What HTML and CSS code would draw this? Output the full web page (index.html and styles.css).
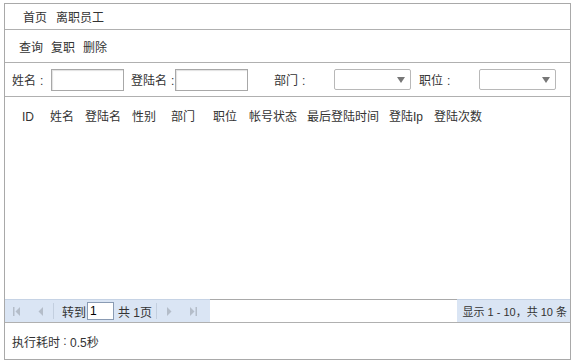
FILE: index.html
```html
<!DOCTYPE html>
<html>
<head>
<meta charset="utf-8">
<link rel="stylesheet" href="styles.css">
</head>
<body>
<div class="frame">
  <div class="crumb"><span>首页</span><span>离职员工</span></div>
  <div class="toolbar"><span>查询</span><span>复职</span><span>删除</span></div>
  <div class="search">
    <span class="lbl l1">姓名<span class="cl">:</span></span><input class="txt t1" type="text">
    <span class="lbl l2">登陆名<span class="cl">:</span></span><input class="txt t2" type="text">
    <span class="lbl l3">部门<span class="cl">:</span></span><span class="sel"><span class="arrow"></span></span>
    <span class="lbl l4">职位<span class="cl">:</span></span><span class="sel"><span class="arrow"></span></span>
  </div>
  <div class="grid">
    <div class="head">
      <span class="c1">ID</span><span class="c2">姓名</span><span class="c3">登陆名</span><span class="c4">性别</span><span class="c5">部门</span><span class="c6">职位</span><span class="c7">帐号状态</span><span class="c8">最后登陆时间</span><span class="c9">登陆Ip</span><span>登陆次数</span>
    </div>
  </div>
  <div class="pager">
    <div class="pleft">
      <svg class="pi first" width="8" height="9" viewBox="0 0 8 9"><rect x="0" y="0" width="1.5" height="9" fill="#b4bdc9"/><path d="M7 0 L2.5 4.5 L7 9 Z" fill="#b4bdc9"/></svg>
      <svg class="pi prev" width="6" height="9" viewBox="0 0 6 9"><path d="M5 0 L0.5 4.5 L5 9 Z" fill="#b4bdc9"/></svg>
      <span class="sep"></span>
      <span class="goto">转到</span><input class="pg" type="text" value="1"><span class="tot">共 1页</span>
      <span class="sep sep2"></span>
      <svg class="pi next" width="6" height="9" viewBox="0 0 6 9"><path d="M1 0 L5.5 4.5 L1 9 Z" fill="#b4bdc9"/></svg>
      <svg class="pi last" width="8" height="9" viewBox="0 0 8 9"><path d="M1 0 L5.5 4.5 L1 9 Z" fill="#b4bdc9"/><rect x="6.5" y="0" width="1.5" height="9" fill="#b4bdc9"/></svg>
    </div>
    <div class="pmid"></div>
    <div class="pright">显示 1 - 10，共 10 条</div>
  </div>
  <div class="foot">执行耗时<span class="cl2">:</span>0.5秒</div>
</div>
</body>
</html>
```

FILE: styles.css
```css
html, body { margin: 0; padding: 0; background: #fff; }
body {
  font-family: "Liberation Sans", "Noto Sans CJK SC", sans-serif;
  font-size: 12px;
  color: #333;
}
.frame {
  margin: 3px 0 0 4px;
  width: 565px;
  height: 355px;
  border: 1px solid #a9a9a9;
  display: flex;
  flex-direction: column;
}
.cl {
  display: inline-block;
  margin-left: 4px;
  width: 4px;
}
.cl2 {
  display: inline-block;
  width: 10px;
  text-align: center;
}
.crumb {
  height: 25px;
  border-bottom: 1px solid #b0b0b0;
  display: flex;
  align-items: center;
  padding-left: 18px;
  gap: 9px;
}
.toolbar {
  height: 32px;
  border-bottom: 1px solid #b0b0b0;
  display: flex;
  align-items: center;
  padding-left: 14px;
  gap: 8px;
}
.search {
  height: 33px;
  border-bottom: 1px solid #b0b0b0;
  display: flex;
  align-items: center;
  padding-left: 7px;
}
.lbl { white-space: nowrap; }
.t1 { margin-left: 7px; }
.l2 { margin-left: 7px; }
.t2 { margin-left: 0; }
.l3 { margin-left: 26px; }
.l3 + .sel { margin-left: 28px; }
.l4 { margin-left: 8px; }
.l4 + .sel { margin-left: 28px; }
.txt {
  box-sizing: border-box;
  width: 73px;
  height: 22px;
  border: 1px solid #a8a8a8;
  box-shadow: inset 1px 1px 1px #e2e2e2;
  padding: 0 2px;
  font: inherit;
}
.sel {
  box-sizing: border-box;
  width: 77px;
  height: 21px;
  border: 1px solid #b8b8b8;
  border-radius: 2px;
  display: flex;
  justify-content: flex-end;
  align-items: center;
  background: #fff;
}
.arrow {
  width: 0; height: 0;
  margin-right: 5px;
  border-left: 4px solid transparent;
  border-right: 4px solid transparent;
  border-top: 6px solid #777;
}
.grid {
  flex: 1;
  padding-left: 17px;
}
.head {
  display: flex;
  align-items: baseline;
  padding-top: 10px;
  white-space: nowrap;
}
.c1 { width: 28px; }
.c2 { width: 35px; }
.c3 { width: 47px; }
.c4 { width: 39px; }
.c5 { width: 42px; }
.c6 { width: 36px; }
.c7 { width: 58px; }
.c8 { width: 82px; }
.c9 { width: 45px; }
.pager {
  height: 23px;
  display: flex;
}
.pleft {
  width: 205px;
  background: #dae5f4;
  display: flex;
  align-items: center;
  border-top: 1px solid #c6d3e5;
}
.pi { flex: none; }
.first { margin-left: 8px; }
.prev { margin-left: 17px; }
.sep {
  width: 1px;
  height: 16px;
  background: #c3cfdf;
  margin-left: 9px;
}
.sep2 { margin-left: 4px; }
.pleft .goto { margin-left: 8px; }
.pg {
  box-sizing: border-box;
  width: 27px;
  height: 18px;
  margin: 0 4px 0 1px;
  border: 1px solid #8a9bb3;
  padding: 0 2px;
  font: inherit;
  color: #000;
  line-height: 16px;
}
.next { margin-left: 9px; }
.last { margin-left: 17px; }
.pmid {
  flex: 1;
  border-top: 1px solid #a9a9a9;
}
.pright {
  background: #dae5f4;
  border-top: 1px solid #c6d3e5;
  display: flex;
  align-items: center;
  padding: 0 3px 0 5px;
  font-size: 11px;
  white-space: nowrap;
}
.foot {
  flex: none;
  height: 36px;
  border-top: 1px solid #b0b0b0;
  display: flex;
  align-items: center;
  padding-left: 7px;
}
```
